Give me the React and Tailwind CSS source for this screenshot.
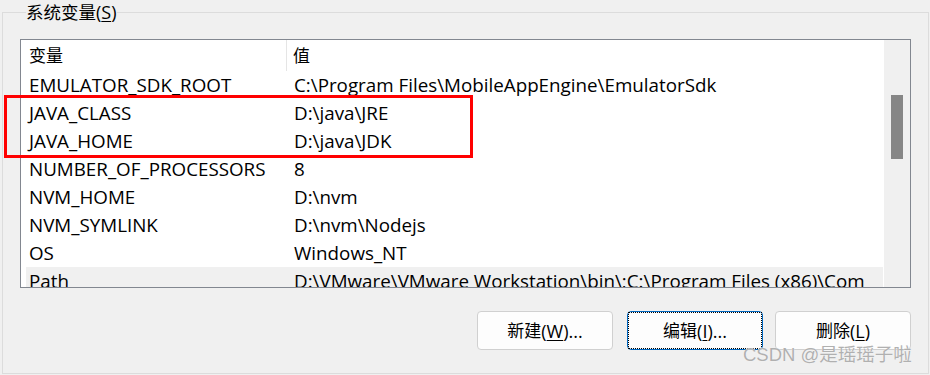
import React from 'react';

const rows = [
  ['EMULATOR_SDK_ROOT', 'C:\\Program Files\\MobileAppEngine\\EmulatorSdk'],
  ['JAVA_CLASS', 'D:\\java\\JRE'],
  ['JAVA_HOME', 'D:\\java\\JDK'],
  ['NUMBER_OF_PROCESSORS', '8'],
  ['NVM_HOME', 'D:\\nvm'],
  ['NVM_SYMLINK', 'D:\\nvm\\Nodejs'],
  ['OS', 'Windows_NT'],
  ['Path', 'D:\\VMware\\VMware Workstation\\bin\\;C:\\Program Files (x86)\\Com'],
];

const font = { fontFamily: '"Open Sans", "Noto Sans CJK SC", sans-serif' };

function Button({ label, keyChar, tail, focused }) {
  return (
    <button
      type="button"
      className={`flex h-[39px] w-[136px] items-center justify-center rounded-[4px] border bg-[#fdfdfd] text-[17px] leading-[22px] text-black ${
        focused ? 'border-[#0067c0]' : 'border-[#d0d0d0]'
      }`}
    >
      <span
        className={`flex h-[35px] w-[132px] items-center justify-center ${
          focused ? 'outline-1 outline-dotted outline-black' : ''
        }`}
      >
        <span className="text-[17px]">{label}</span>
        <span className="text-[18px]">
          (<span className="underline underline-offset-2">{keyChar}</span>){tail}
        </span>
      </span>
    </button>
  );
}

export default function App() {
  return (
    <div
      className="relative h-[375px] w-[930px] overflow-hidden bg-[#f0f0f0] text-black"
      style={font}
    >
      <fieldset className="ml-[2px] mt-[1px] h-[373px] w-[927px] border border-[#dcdcdc] pl-[17px]">
        <legend className="ml-[6px] px-0 text-[18px] leading-[22px]">
          <span className="text-[17.5px]">系统变量</span>(<span className="underline underline-offset-2">S</span>)
        </legend>

        <div className="mt-[16px] flex h-[249px] w-[891px] border border-[#828790] bg-white">
          <div className="flex w-[862px] flex-col overflow-hidden">
            <div className="flex h-[31px] shrink-0 items-center text-[17px]">
              <div className="flex h-full w-[266px] items-center border-r border-[#e5e5e5] pl-[8px] pt-[1px]">
                变量
              </div>
              <div className="pl-[6px] pt-[1px]">值</div>
            </div>
            {rows.map(([name, value], i) => (
              <div
                key={name}
                className={`ml-[5px] flex h-[28px] shrink-0 items-center whitespace-nowrap pl-[3px] text-[18.8px] leading-[24px] ${
                  i === rows.length - 1 ? 'bg-[#f0f0f0]' : ''
                }`}
              >
                <div className="w-[258px] shrink-0">{name}</div>
                <div className="pl-[7px]">{value}</div>
              </div>
            ))}
          </div>
          <div className="w-[1px] bg-white" />
          <div className="flex w-[26px] flex-col bg-[#f0f0f0]">
            <div className="ml-[7px] mt-[55px] h-[64px] w-[12px] bg-[#868686]" />
          </div>
        </div>

        <div className="mt-[23px] flex w-[891px] justify-end">
          <Button label="新建" keyChar="W" tail="..." />
          <div className="w-[14px]" />
          <Button label="编辑" keyChar="I" tail="..." focused />
          <div className="w-[12px]" />
          <Button label="删除" keyChar="L" tail="" />
        </div>
      </fieldset>

      <div className="pointer-events-none absolute left-[4px] top-[95px] h-[63px] w-[469px] border-[3px] border-[#ff0000]" />

      <div
        className="pointer-events-none absolute left-[743px] top-[343px] text-[18.5px] leading-[24px] text-[#b0b0b0]"
        style={{ fontFamily: '"Liberation Sans", "Noto Sans CJK SC", sans-serif', textShadow: '0 0 1px #ffffff' }}
      >
        CSDN @是瑶瑶子啦
      </div>
    </div>
  );
}
